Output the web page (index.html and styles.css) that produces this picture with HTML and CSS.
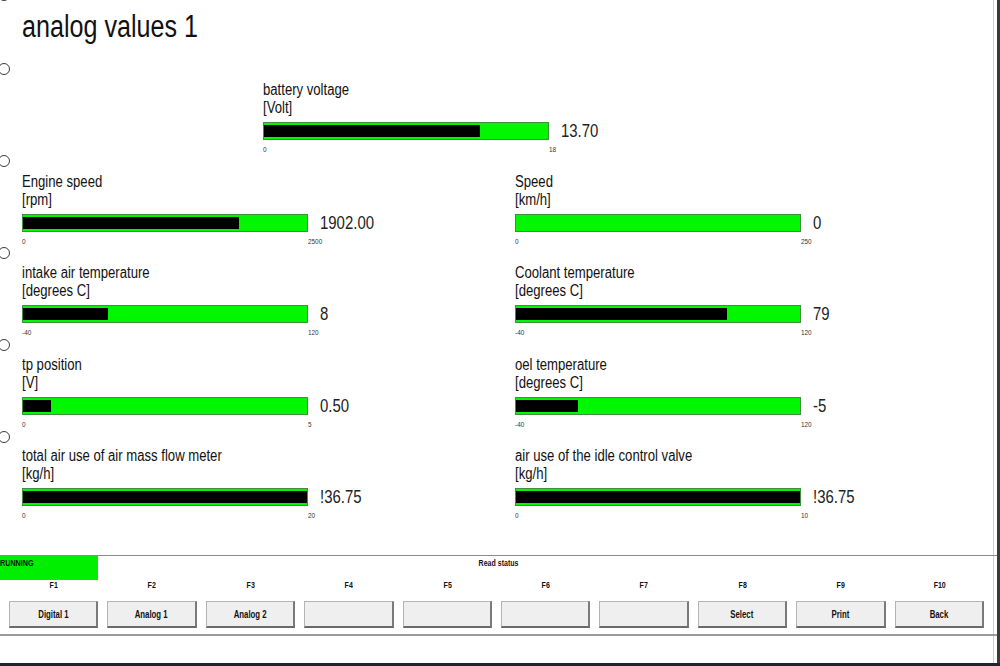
FILE: index.html
```html
<!DOCTYPE html>
<html lang="en">
<head>
  <meta charset="UTF-8">
  <title>analog values 1</title>
  <link rel="stylesheet" href="styles.css">
</head>
<body>
  <div class="screen">
    <div class="main">
      <div class="rail">
        <span class="dot"></span>
        <span class="dot"></span>
        <span class="dot"></span>
        <span class="dot"></span>
        <span class="dot"></span>
        <span class="dot"></span>
      </div>

      <div class="content">
        <h1 class="title">analog values 1</h1>

        <div class="gauges">
          <div class="gauge wide">
            <div class="label">battery voltage</div>
            <div class="label">[Volt]</div>
            <div class="bar-row">
              <div class="bar"><div class="fill" style="width: 76.1%"></div></div>
              <span class="value">13.70</span>
            </div>
            <div class="scale"><span class="min">0</span><span>18</span></div>
          </div>

          <div class="gauge">
            <div class="label">Engine speed</div>
            <div class="label">[rpm]</div>
            <div class="bar-row">
              <div class="bar"><div class="fill" style="width: 76.1%"></div></div>
              <span class="value">1902.00</span>
            </div>
            <div class="scale"><span class="min">0</span><span>2500</span></div>
          </div>

          <div class="gauge">
            <div class="label">Speed</div>
            <div class="label">[km/h]</div>
            <div class="bar-row">
              <div class="bar"><div class="fill" style="width: 0%"></div></div>
              <span class="value">0</span>
            </div>
            <div class="scale"><span class="min">0</span><span>250</span></div>
          </div>

          <div class="gauge">
            <div class="label">intake air temperature</div>
            <div class="label">[degrees C]</div>
            <div class="bar-row">
              <div class="bar"><div class="fill" style="width: 30%"></div></div>
              <span class="value">8</span>
            </div>
            <div class="scale"><span class="min">-40</span><span>120</span></div>
          </div>

          <div class="gauge">
            <div class="label">Coolant temperature</div>
            <div class="label">[degrees C]</div>
            <div class="bar-row">
              <div class="bar"><div class="fill" style="width: 74.4%"></div></div>
              <span class="value">79</span>
            </div>
            <div class="scale"><span class="min">-40</span><span>120</span></div>
          </div>

          <div class="gauge">
            <div class="label">tp position</div>
            <div class="label">[V]</div>
            <div class="bar-row">
              <div class="bar"><div class="fill" style="width: 10%"></div></div>
              <span class="value">0.50</span>
            </div>
            <div class="scale"><span class="min">0</span><span>5</span></div>
          </div>

          <div class="gauge">
            <div class="label">oel temperature</div>
            <div class="label">[degrees C]</div>
            <div class="bar-row">
              <div class="bar"><div class="fill" style="width: 21.9%"></div></div>
              <span class="value">-5</span>
            </div>
            <div class="scale"><span class="min">-40</span><span>120</span></div>
          </div>

          <div class="gauge">
            <div class="label">total air use of air mass flow meter</div>
            <div class="label">[kg/h]</div>
            <div class="bar-row">
              <div class="bar"><div class="fill" style="width: 100%"></div></div>
              <span class="value">!36.75</span>
            </div>
            <div class="scale"><span class="min">0</span><span>20</span></div>
          </div>

          <div class="gauge">
            <div class="label">air use of the idle control valve</div>
            <div class="label">[kg/h]</div>
            <div class="bar-row">
              <div class="bar"><div class="fill" style="width: 100%"></div></div>
              <span class="value">!36.75</span>
            </div>
            <div class="scale"><span class="min">0</span><span>10</span></div>
          </div>
        </div>
      </div>
    </div>

    <div class="bottom">
      <div class="status">
        <div class="running"><span>RUNNING</span></div>
        <div class="status-text"><span>Read status</span></div>
      </div>

      <div class="fkeys">
        <div class="fkey"><span>F1</span><button><span>Digital 1</span></button></div>
        <div class="fkey"><span>F2</span><button><span>Analog 1</span></button></div>
        <div class="fkey"><span>F3</span><button><span>Analog 2</span></button></div>
        <div class="fkey"><span>F4</span><button></button></div>
        <div class="fkey"><span>F5</span><button></button></div>
        <div class="fkey"><span>F6</span><button></button></div>
        <div class="fkey"><span>F7</span><button></button></div>
        <div class="fkey"><span>F8</span><button><span>Select</span></button></div>
        <div class="fkey"><span>F9</span><button><span>Print</span></button></div>
        <div class="fkey"><span>F10</span><button><span>Back</span></button></div>
      </div>
    </div>
  </div>
  <div class="taskbar"></div>
</body>
</html>
```

FILE: styles.css
```css
body {
  margin: 0;
  background-color: #fff;
  font-family: "Liberation Sans", Arial, sans-serif;
  color: #111;
  overflow: hidden;
}

.screen {
  height: 663px;
  border-right: 3px solid #3a3a3a;
  box-shadow: inset -3px 0 0 #fff, inset -4px 0 0 #cfcfcf;
  display: flex;
  flex-direction: column;
}

/* gauges area */
.main {
  height: 555px;
  display: flex;
  overflow: hidden;
}

.rail {
  width: 22px;
  flex: none;
  display: flex;
  flex-direction: column;
  gap: 80px;
}

.dot {
  width: 12px;
  height: 12px;
  box-sizing: border-box;
  margin-left: -2px;
  border: 1px solid #3c3c3c;
  border-radius: 50%;
  background-color: #fff;
}

.dot:first-child {
  margin-top: -11px;
  margin-bottom: -18px;
}

.content {
  flex: 1;
}

/* the old tester font is a narrow one, squeeze the text to fit */
.title {
  margin: 9px 0 0;
  font-size: 31px;
  font-weight: normal;
  line-height: 36px;
  color: #111;
  transform: scaleX(0.81);
  transform-origin: left center;
}

.gauges {
  margin-top: 36px;
  display: grid;
  grid-template-columns: 493px 1fr;
  row-gap: 17.6px;
}

.gauge.wide {
  grid-column: 1 / -1;
  margin-left: 241px;
}

.label {
  font-size: 16px;
  line-height: 18px;
  transform: scaleX(0.82);
  transform-origin: left center;
}

.bar-row {
  margin-top: 5px;
  display: flex;
  align-items: center;
}

.bar {
  width: 286px;
  height: 18px;
  box-sizing: border-box;
  padding: 2px 0;
  border: 1px solid #3f8f3f;
  background-color: #00f700;
}

.fill {
  height: 100%;
  background-color: #000;
}

.value {
  margin-left: 12px;
  font-size: 18px;
  line-height: 18px;
  color: #222;
  transform: scaleX(0.83);
  transform-origin: left center;
}

.scale {
  margin-top: 5px;
  display: flex;
  font-size: 8px;
  line-height: 10px;
  color: #333;
}

.scale span {
  transform: scaleX(0.8);
  transform-origin: left center;
}

.scale .min {
  width: 286px;
}

/* status + function keys */
.bottom {
  border-top: 1px solid #8c8c8c;
  border-bottom: 2px solid #9a9a9a;
}

.status {
  height: 24px;
  display: grid;
  grid-template-columns: 98px 1fr 98px;
  font-size: 9px;
  font-weight: bold;
}

.running {
  background-color: #00ee00;
  padding-top: 2px;
  line-height: 10px;
}

.running span {
  display: inline-block;
  transform: scaleX(0.8);
  transform-origin: left center;
}

.status-text {
  text-align: center;
  padding-top: 2px;
  line-height: 10px;
}

.status-text span,
.fkey span {
  display: inline-block;
  transform: scaleX(0.78);
}

.fkeys {
  display: grid;
  grid-template-columns: repeat(10, 1fr);
  column-gap: 9px;
  padding: 0 13px 6px 9px;
}

.fkey {
  display: flex;
  flex-direction: column;
  align-items: stretch;
  text-align: center;
  font-size: 9px;
  font-weight: bold;
  line-height: 10px;
}

.fkey button {
  margin-top: 11px;
  height: 27px;
  padding: 0;
  border: 1px solid #b4b4b4;
  border-right: 2px solid #7a7a7a;
  border-bottom: 2px solid #6a6a6a;
  background-color: #efefef;
  font-family: inherit;
  font-size: 10px;
  font-weight: bold;
  color: #111;
}

.taskbar {
  height: 3px;
  background-color: #1c2530;
}
```
